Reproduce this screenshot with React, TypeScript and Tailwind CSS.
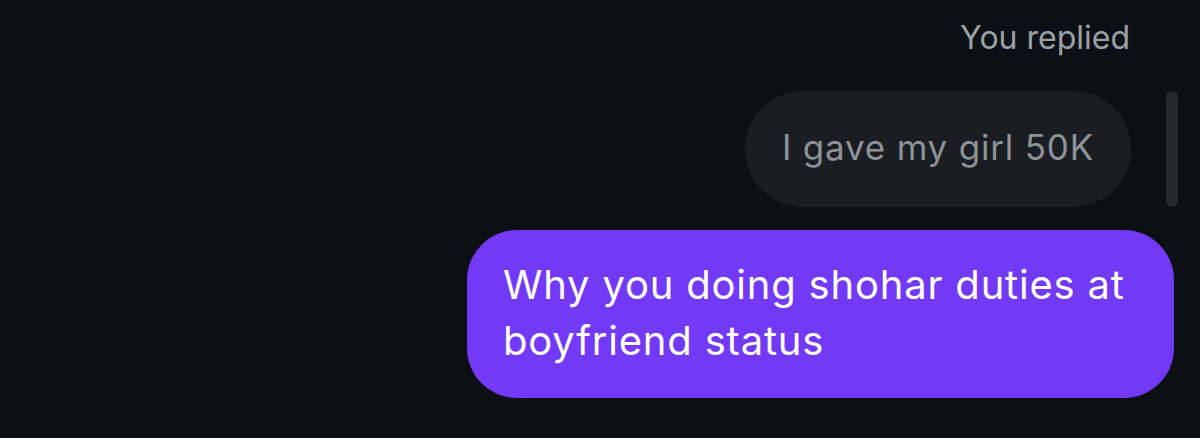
import React from 'react';

const App: React.FC = () => {
    return (
        <div
            className="w-[1200px] h-[438px] bg-[#0c1014] overflow-hidden flex flex-col items-end"
            style={{ fontFamily: 'Inter, "Noto Sans", sans-serif' }}
        >
            <div className="mt-[20px] mr-[70px] text-[32px] leading-[36px] text-[#9ba1a8]">You replied</div>

            <div className="mt-[35px] mr-[22px] flex items-start gap-[35px]">
                <div className="h-[116px] rounded-full bg-[#1a1d21] px-[37px] pb-[4px] flex items-center text-[35px] tracking-[0.8px] text-[#8f9398]">
                    I gave my girl 50K
                </div>
                <div className="w-[12px] h-[116px] rounded-full bg-[#25282c]" />
            </div>

            <div className="mt-[23px] mr-[26px] w-[707px] h-[168px] rounded-[50px] bg-[#7239f7] px-[36px] pt-[27px] text-[40px] leading-[56px] tracking-[0.8px] text-white">
                Why you doing shohar duties at boyfriend status
            </div>
        </div>
    );
};

export default App;
